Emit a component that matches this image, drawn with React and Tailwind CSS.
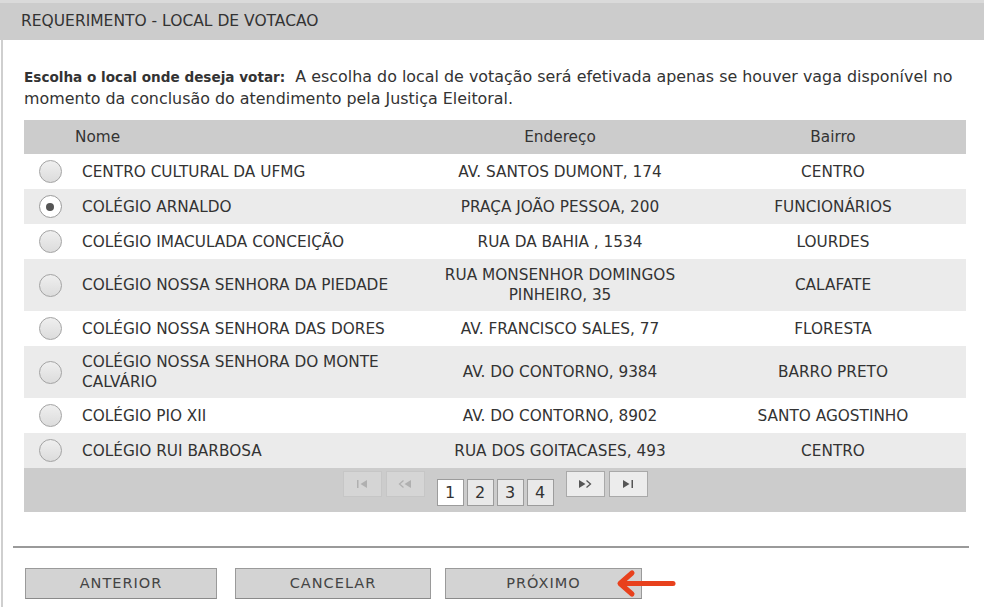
const rows = [
  { nome: "CENTRO CULTURAL DA UFMG", end: "AV. SANTOS DUMONT, 174", bairro: "CENTRO" },
  { nome: "COLÉGIO ARNALDO", end: "PRAÇA JOÃO PESSOA, 200", bairro: "FUNCIONÁRIOS", sel: true },
  { nome: "COLÉGIO IMACULADA CONCEIÇÃO", end: "RUA DA BAHIA , 1534", bairro: "LOURDES" },
  { nome: "COLÉGIO NOSSA SENHORA DA PIEDADE", end: "RUA MONSENHOR DOMINGOS PINHEIRO, 35", bairro: "CALAFATE" },
  { nome: "COLÉGIO NOSSA SENHORA DAS DORES", end: "AV. FRANCISCO SALES, 77", bairro: "FLORESTA" },
  { nome: "COLÉGIO NOSSA SENHORA DO MONTE CALVÁRIO", end: "AV. DO CONTORNO, 9384", bairro: "BARRO PRETO" },
  { nome: "COLÉGIO PIO XII", end: "AV. DO CONTORNO, 8902", bairro: "SANTO AGOSTINHO" },
  { nome: "COLÉGIO RUI BARBOSA", end: "RUA DOS GOITACASES, 493", bairro: "CENTRO" },
];

function Radio({ sel }) {
  return sel ? (
    <div className="w-[23px] h-[23px] rounded-full border border-[#9a9a9a] bg-white flex items-center justify-center">
      <div className="w-[8px] h-[8px] rounded-full bg-[#555]" />
    </div>
  ) : (
    <div className="w-[23px] h-[23px] rounded-full border border-[#a3a3a3] bg-gradient-to-b from-[#efefef] to-[#dcdcdc]" />
  );
}

function NavBtn({ disabled, children }) {
  return (
    <div
      className={
        disabled
          ? "w-[39px] h-[26px] border border-[#c6c6c6] bg-[#d5d5d5] flex items-center justify-center text-[#b0b0b0]"
          : "w-[39px] h-[26px] border border-[#a9a9a9] bg-[#ececec] flex items-center justify-center text-[#555]"
      }
    >
      {children}
    </div>
  );
}

function PageBtn({ n, active }) {
  return (
    <div
      className={
        (active ? "bg-white" : "bg-[#e9e9e9]") +
        " w-[27px] h-[27px] border border-[#9c9c9c] flex items-center justify-center text-[16px] text-[#333]"
      }
    >
      {n}
    </div>
  );
}

function Btn({ w, children }) {
  return (
    <div
      className={
        w +
        " h-[31px] bg-[#d3d3d3] border border-[#9a9a9a] border-b-[#8a8a8a] flex items-center justify-center text-[14.5px] tracking-[1px] text-[#444]"
      }
    >
      {children}
    </div>
  );
}

export default function App() {
  return (
    <div className="w-[984px] h-[607px] bg-white font-['DejaVu_Sans',sans-serif] text-[#333] relative overflow-hidden">
      <div className="h-[40px] bg-[#cccccc] border-t-[3px] border-[#dadada] flex items-center pl-[21px] text-[15.5px] text-[#333]">
        REQUERIMENTO - LOCAL DE VOTACAO
      </div>
      <div className="h-[567px] ml-px border-l-2 border-[#cfcfcf] pl-[21px] pt-[26px]">
        <div className="w-[942px] text-[15.9px] leading-[22px] text-[#333]">
          <div>
            <span className="font-bold text-[13.6px]">Escolha o local onde deseja votar:</span>
            <span>&nbsp; A escolha do local de votação será efetivada apenas se houver vaga disponível no</span>
          </div>
          <div>momento da conclusão do atendimento pela Justiça Eleitoral.</div>
        </div>

        <div className="w-[942px] mt-[10px] text-[15.3px]">
          <div className="grid grid-cols-[52px_344px_280px_1fr] h-[34px] bg-[#cccccc] items-center">
            <div />
            <div className="-ml-[1px]">Nome</div>
            <div className="text-center">Endereço</div>
            <div className="text-center">Bairro</div>
          </div>
          {rows.map((r, i) => (
            <div
              key={i}
              className={
                (i % 2 === 1 ? "bg-[#ebebeb]" : "bg-white") +
                " grid grid-cols-[52px_344px_280px_1fr] min-h-[35px] items-center leading-[20px] py-[6px]"
              }
            >
              <div className="flex justify-center">
                <Radio sel={r.sel} />
              </div>
              <div className="pl-[6px] pr-[8px]">{r.nome}</div>
              <div className="text-center px-[12px]">{r.end}</div>
              <div className="text-center px-[8px]">{r.bairro}</div>
            </div>
          ))}
          <div className="h-[44px] bg-[#cccccc] flex justify-center items-start pt-[3px]">
            <div className="flex gap-[4px]">
              <NavBtn disabled>
                <svg width="12" height="10" viewBox="0 0 12 10">
                  <rect x="1" y="1" width="1.5" height="8" fill="currentColor" />
                  <path d="M11 1 L4.5 5 L11 9 Z" fill="currentColor" />
                </svg>
              </NavBtn>
              <NavBtn disabled>
                <svg width="14" height="10" viewBox="0 0 14 10">
                  <path d="M5.5 1.5 L1.5 5 L5.5 8.5" fill="none" stroke="currentColor" strokeWidth="1.3" />
                  <path d="M13 1 L6.5 5 L13 9 Z" fill="currentColor" />
                </svg>
              </NavBtn>
            </div>
            <div className="flex gap-[3px] ml-[12px] mt-[8px]">
              <PageBtn n="1" active />
              <PageBtn n="2" />
              <PageBtn n="3" />
              <PageBtn n="4" />
            </div>
            <div className="flex gap-[4px] ml-[12px]">
              <NavBtn>
                <svg width="14" height="10" viewBox="0 0 14 10">
                  <path d="M1 1 L7.5 5 L1 9 Z" fill="currentColor" />
                  <path d="M8.5 1.5 L12.5 5 L8.5 8.5" fill="none" stroke="currentColor" strokeWidth="1.3" />
                </svg>
              </NavBtn>
              <NavBtn>
                <svg width="12" height="10" viewBox="0 0 12 10">
                  <path d="M1 1 L7.5 5 L1 9 Z" fill="currentColor" />
                  <rect x="9.5" y="1" width="1.5" height="8" fill="currentColor" />
                </svg>
              </NavBtn>
            </div>
          </div>
        </div>

        <div className="-ml-[11px] w-[956px] h-[2px] bg-[#9a9a9a] mt-[34px]" />

        <div className="flex mt-[20px] ml-[1px]">
          <Btn w="w-[192px]">ANTERIOR</Btn>
          <div className="ml-[18px]">
            <Btn w="w-[196px]">CANCELAR</Btn>
          </div>
          <div className="ml-[14px]">
            <Btn w="w-[197px]">PRÓXIMO</Btn>
          </div>
        </div>
      </div>

      <svg className="absolute left-[612px] top-[568px]" width="66" height="31" viewBox="0 0 66 31">
        <path d="M9 15.5 L61 15.5" stroke="#e8411d" strokeWidth="5" strokeLinecap="round" fill="none" />
        <path d="M20 5 L8 15.5 L20 26" stroke="#e8411d" strokeWidth="5" strokeLinecap="round" strokeLinejoin="round" fill="none" />
      </svg>
    </div>
  );
}
